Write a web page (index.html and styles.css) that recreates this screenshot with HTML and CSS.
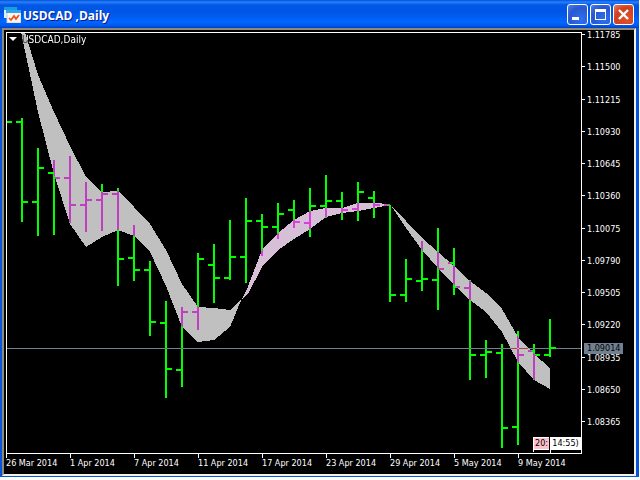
FILE: index.html
```
<!DOCTYPE html>
<html lang="en">
<head>
<meta charset="UTF-8">
<title>USDCAD,Daily</title>
<link rel="stylesheet" href="styles.css">
</head>

<body>

<div class="window">

   <header class="titlebar">
      <svg class="app-icon" width="17" height="17" viewBox="0 0 17 17">
         <rect x="0" y="1" width="13" height="11" fill="#d8f0f8"/>
         <rect x="0" y="1" width="13" height="3" fill="#1c9ce0"/>
         <rect x="3" y="5" width="14" height="12" fill="#fff4e8" stroke="#b8d8e8"/>
         <rect x="2" y="4" width="15" height="3" fill="#2ca8ec"/>
         <path d="M5 12 L7 14 L10 10 L12 13 L15 9" fill="none" stroke="#e85020" stroke-width="1.6"/>
      </svg>
      <h1 class="title">USDCAD ,Daily</h1>
      <div class="window-buttons">
         <button class="win-btn" aria-label="Minimize">
            <svg width="19" height="19" viewBox="0 0 19 19"><rect x="4" y="12" width="7" height="3" fill="#fff"/></svg>
         </button>
         <button class="win-btn" aria-label="Maximize">
            <svg width="19" height="19" viewBox="0 0 19 19"><path d="M4 4h11v11h-11z M5 7v7h9v-7z" fill="#fff" fill-rule="evenodd"/></svg>
         </button>
         <button class="win-btn close" aria-label="Close">
            <svg width="19" height="19" viewBox="0 0 19 19"><path d="M5 5 L14 14 M14 5 L5 14" stroke="#fff" stroke-width="2.4"/></svg>
         </button>
      </div>
   </header>

   <main class="chart">

      <section class="plot">
         <svg class="canvas" viewBox="7 33 574 420" preserveAspectRatio="none">
            <!-- current price, open where the last close tick lies -->
            <path d="M7 348.5 H549 M556 348.5 H581" stroke="#708090"/>
            <!-- bands between the two averages -->
            <path fill="#c0c0c0" d="M21 32 L25 32 L38 75 L54 112 L70 146 L86 177 L102 192 L118 191 L134 207 L150 224 L166 250 L182 284 L198 307 L214 308 L230 310 L242 298 L230 327 L214 340 L198 342 L182 327 L166 286 L150 252 L134 236 L118 230 L102 237 L86 247 L70 224 L54 174 L38 112 Z"/>
            <path fill="#d8bfd8" d="M242 299 L247 289 L262 250 L278 233 L294 220 L310 211 L326 208 L342 208 L358 203 L374 203 L390 204 L390 205 L374 208 L358 211 L342 213 L326 217 L310 229 L294 239 L278 250 L262 267 L248 294 Z"/>
            <path fill="#c0c0c0" d="M390 204 L406 221 L422 238 L438 252 L454 266 L470 281 L486 293 L502 309 L518 337 L534 354 L550 368 L550 389 L534 380 L518 362 L502 332 L486 312 L470 300 L454 285 L438 268 L422 250 L406 228 Z"/>
            <line x1="511" y1="348.5" x2="528" y2="348.5" stroke="#b04050"/>
            <path id="bars" class="bars"/>
         </svg>
         <p class="symbol">
            <svg width="8" height="5" viewBox="0 0 8 5"><path d="M0 0h8l-4 4z" fill="#fff"/></svg>
            <span>USDCAD,Daily</span>
         </p>
         <div class="events">
            <span class="event past">20:</span>
            <span class="event">14:55)</span>
         </div>
      </section>

      <aside class="prices">
         <span>1.11785</span>
         <span>1.11500</span>
         <span>1.11215</span>
         <span>1.10930</span>
         <span>1.10645</span>
         <span>1.10360</span>
         <span>1.10075</span>
         <span>1.09790</span>
         <span>1.09505</span>
         <span>1.09220</span>
         <span>1.08935</span>
         <span>1.08650</span>
         <span>1.08365</span>
         <b class="current">1.09014</b>
      </aside>

      <footer class="dates">
         <span>26 Mar 2014</span>
         <span>1 Apr 2014</span>
         <span>7 Apr 2014</span>
         <span>11 Apr 2014</span>
         <span>17 Apr 2014</span>
         <span>23 Apr 2014</span>
         <span>29 Apr 2014</span>
         <span>5 May 2014</span>
         <span>9 May 2014</span>
      </footer>

   </main>

</div>

<script src="script.js"></script>
</body>
</html>
```

FILE: styles.css
```
* {
   box-sizing: border-box;
}

body {
   margin: 0;
   background: #fff;
   font-family: "DejaVu Sans Condensed", "DejaVu Sans", sans-serif;
   font-size: 9px;
   color: #fff;
}

h1, p {
   margin: 0;
}

.window {
   display: flex;
   flex-direction: column;
   height: calc(100vh - 3px);
   min-height: 300px;
   margin-right: 1px;
   padding: 0 3px 1px 2px;
   background: #0855dd;
}

/* title bar */
.titlebar {
   display: flex;
   align-items: center;
   height: 28px;
   margin: 0 -3px 0 -2px;
   padding: 0 5px 0 4px;
   background: linear-gradient(#0050e0 0, #2a80f8 2px, #0058e6 5px, #0055e5 12px, #0066ff 22px, #005cf5 25px, #0040c0 28px);
}

.app-icon {
   margin-top: 1px;
}

.title {
   flex: 1;
   margin-left: 2px;
   padding-top: 3px;
   font-family: "Open Sans", "DejaVu Sans Condensed", sans-serif;
   font-size: 12px;
   font-weight: bold;
   line-height: 16px;
   text-shadow: 1px 1px 0 #0a1883;
}

.window-buttons {
   display: flex;
   gap: 2px;
   padding-top: 1px;
}

.win-btn {
   width: 21px;
   height: 21px;
   padding: 0;
   border: 1px solid #fff;
   border-radius: 3px;
   background: radial-gradient(circle at 70% 75%, #2f70f0, #2858d0 60%, #5080e8);
}

.win-btn svg {
   display: block;
}

.win-btn.close {
   background: radial-gradient(circle at 70% 75%, #e05028, #d04020 60%, #e88068);
}

/* chart area */
.chart {
   flex: 1;
   min-height: 0;
   display: grid;
   grid-template-columns: 1fr 52px;
   grid-template-rows: 1fr 20px;
   padding: 2px 0 0 2px;
   border: 2px solid #f4f0e4;
   border-top-color: #8c8a7c;
   border-left-color: #8c8a7c;
   background: #000;
}

.plot {
   position: relative;
   min-height: 0;
   border: 1px solid #fff;
   background: #000;
   isolation: isolate;
}

.canvas {
   display: block;
   width: 100%;
   height: 100%;
   shape-rendering: crispEdges;
}

/* the bars invert where they cross a band */
.bars {
   fill: none;
   stroke: #0f0;
   stroke-width: 2px;
   shape-rendering: geometricPrecision;
   mix-blend-mode: difference;
}

.symbol {
   position: absolute;
   top: 0;
   left: 2px;
   display: flex;
   align-items: center;
   gap: 5px;
   font-size: 10px;
   line-height: 13px;
   mix-blend-mode: difference;
}

.events {
   position: absolute;
   right: 0;
   bottom: 3px;
   display: flex;
   gap: 1px;
   line-height: 13px;
   color: #000;
}

.event {
   position: relative;
   width: 31px;
   background: #fff;
   text-align: center;
}

.event.past {
   width: 16px;
   background: #ffc0cb;
   border: 1px solid #fff;
   border-right: none;
   line-height: 11px;
}

/* stem from the event down to the time scale */
.event::after {
   content: "";
   position: absolute;
   top: 100%;
   left: 0;
   width: 1px;
   height: 3px;
   background: #fff;
}

.event.past::after {
   left: -1px;
}

/* price scale */
.prices {
   position: relative;
   display: flex;
   flex-direction: column;
   justify-content: space-between;
   padding-bottom: 29px;
}

.prices span {
   position: relative;
   padding-left: 5px;
   line-height: 6px;
}

.prices span::before {
   content: "";
   position: absolute;
   top: 2px;
   left: 0;
   width: 3px;
   height: 1px;
   background: #fff;
}

.current {
   position: absolute;
   bottom: 100px;
   left: 2px;
   width: 39px;
   padding-left: 3px;
   background: #708090;
   color: #000;
   font-weight: normal;
   line-height: 11px;
}

/* date scale */
.dates {
   display: grid;
   grid-template-columns: repeat(9, 1fr);
}

.dates span {
   position: relative;
   padding-top: 3px;
   line-height: 12px;
   white-space: nowrap;
}

.dates span::before {
   content: "";
   position: absolute;
   top: 0;
   left: 0;
   width: 1px;
   height: 4px;
   background: #fff;
}
```

FILE: script.js
```
// one row per day: high, low, open, close
var days = [
   [118, 222, 122, 202], [148, 236, 202, 168], [160, 235, 173, 178],
   [156, 223, 178, 205], [182, 232, 205, 200], [184, 231, 200, 194],
   [188, 286, 194, 259], [225, 281, 258, 270], [261, 336, 270, 322],
   [301, 398, 323, 369], [307, 387, 370, 312], [253, 330, 312, 259],
   [244, 303, 265, 278], [220, 280, 278, 257], [198, 283, 257, 221],
   [214, 256, 221, 227], [203, 239, 227, 214], [200, 228, 210, 222],
   [188, 237, 223, 206], [175, 218, 206, 201], [192, 220, 201, 210],
   [182, 221, 209, 192], [191, 218, 198, 205], [205, 302, 205, 295],
   [259, 302, 295, 279], [241, 291, 281, 279], [228, 310, 280, 269],
   [248, 295, 263, 287], [280, 380, 288, 355], [340, 378, 355, 352],
   [344, 448, 353, 428], [331, 445, 427, 355], [344, 380, 351, 355],
   [319, 357, 355, 348]
];

var path = "M7 122H12";

days.forEach(function (day, i) {
   var x = 22 + i * 16;
   path += "M" + x + " " + day[0] + "V" + day[1];
   path += "M" + (x - 6) + " " + day[2] + "H" + x;
   path += "M" + x + " " + day[3] + "H" + (x + 6);
});

document.getElementById("bars").setAttribute("d", path);
```
